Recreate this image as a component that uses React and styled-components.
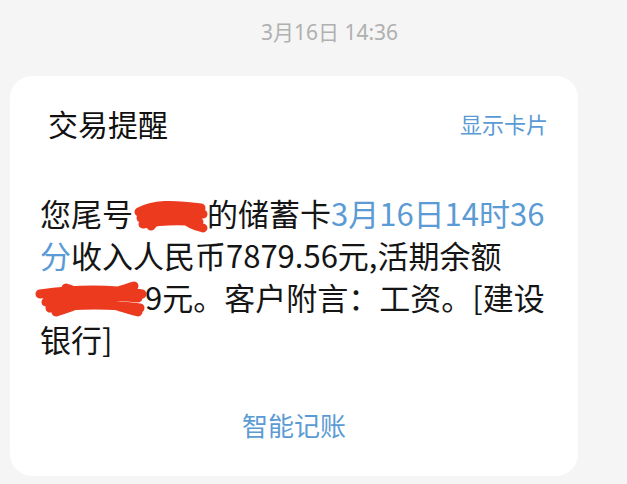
import styled, { createGlobalStyle } from "styled-components";

const GlobalStyle = createGlobalStyle`
  html, body {
    margin: 0;
    padding: 0;
    background: #f5f5f5;
  }
  body {
    font-family: "Noto Sans CJK SC", "Noto Sans", sans-serif;
  }
`;

const Screen = styled.div`
  width: 627px;
  height: 484px;
  overflow: hidden;
  background: #f5f5f5;
  display: flex;
  flex-direction: column;
`;

const DateStamp = styled.div`
  padding: 18px 0 0 32px;
  height: 58px;
  box-sizing: border-box;
  text-align: center;
  font-size: 21px;
  line-height: 28px;
  color: #b0b0b0;
  font-family: "Noto Sans", "Noto Sans CJK SC", sans-serif;
`;

const Card = styled.div`
  margin: 18px 0 0 10px;
  width: 568px;
  height: 400px;
  background: #ffffff;
  border-radius: 22px;
  box-sizing: border-box;
  display: flex;
  flex-direction: column;
`;

const CardHeader = styled.div`
  display: flex;
  align-items: center;
  justify-content: space-between;
  padding: 26px 30px 0 38px;
  height: 68px;
  box-sizing: border-box;
`;

const Title = styled.div`
  font-size: 30px;
  color: #101010;
  line-height: 40px;
`;

const LinkText = styled.div`
  font-size: ${(p) => p.$size || 22}px;
  color: #5b9bd5;
  line-height: 1.3;
`;

const Message = styled.p`
  margin: 0;
  padding: 48px 20px 0 30px;
  font-size: 31px;
  line-height: 42px;
  color: #151515;
`;

const Accent = styled.span`
  color: #5b9bd5;
`;

const Keep = styled.span`
  white-space: nowrap;
`;

const RedactBox = styled.span`
  display: inline-block;
  position: relative;
  width: ${(p) => p.$w}px;
  height: 30px;
  vertical-align: -4px;

  svg {
    position: absolute;
    left: 0;
    top: -2px;
    overflow: visible;
  }
`;

const Footer = styled.div`
  margin-top: auto;
  padding-bottom: 34px;
  display: flex;
  justify-content: center;
`;

const Scribble = ({ w, d }) => (
  <RedactBox $w={w}>
    <svg width={w} height="34" viewBox={`0 0 ${w} 34`}>
      <path
        d={d}
        fill="none"
        stroke="#ec3a1f"
        strokeWidth="9"
        strokeLinecap="round"
        strokeLinejoin="round"
      />
    </svg>
  </RedactBox>
);

export default function App() {
  return (
    <>
      <GlobalStyle />
      <Screen>
        <DateStamp>3月16日 14:36</DateStamp>
        <Card>
          <CardHeader>
            <Title>交易提醒</Title>
            <LinkText>显示卡片</LinkText>
          </CardHeader>
          <Message>
            您尾号
            <Scribble
              w={74}
              d="M6 14 C20 6 40 6 68 10 M8 20 C26 14 50 12 70 16 M10 26 C30 22 48 22 66 24 M30 8 C26 18 22 24 18 28 M50 20 C56 26 62 28 70 30"
            />
            的储蓄卡<Accent>3月16日14时36分</Accent>收入人民币7879.56元,活期余额
            <Keep>
              <Scribble
                w={105}
                d="M0 12 C28 8 66 6 102 12 M6 20 C36 14 66 12 98 16 M10 26 C36 22 74 22 100 26 M16 30 C46 20 74 10 94 4 M26 6 C56 16 74 24 98 30"
              />
              9元。
            </Keep>
            客户附言：工资。[建设银行]
          </Message>
          <Footer>
            <LinkText $size={26}>智能记账</LinkText>
          </Footer>
        </Card>
      </Screen>
    </>
  );
}
